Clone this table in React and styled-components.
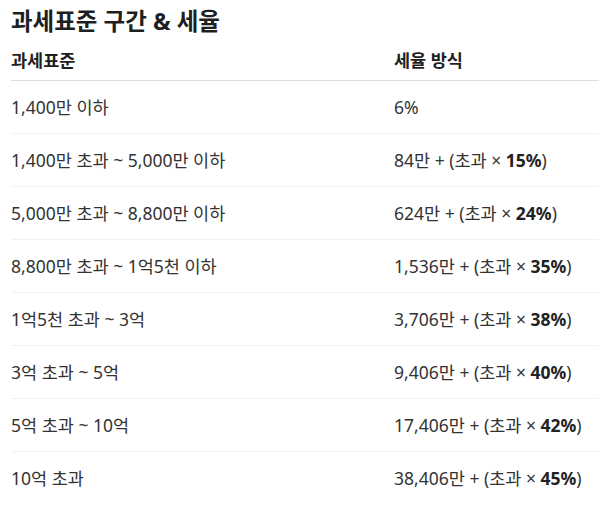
import React from "react";
import styled, { createGlobalStyle } from "styled-components";

const GlobalStyle = createGlobalStyle`
  body {
    margin: 0;
    background: #ffffff;
    font-family: "Noto Sans", "Noto Sans CJK KR", sans-serif;
    color: #2b2b2b;
  }
`;

const Page = styled.div`
  padding: 5px 0 0 11px;
`;

const Title = styled.h2`
  margin: 0;
  font-size: 23.5px;
  font-weight: 700;
  color: #1f1f1f;
  line-height: 32px;
`;

const Table = styled.div`
  display: grid;
  grid-template-columns: 383px 1fr;
`;

const Cell = styled.div`
  font-size: 17.5px;
  line-height: 24px;
  padding: ${(props) => (props.head ? "11px 0 8px" : "14px 0")};
  font-weight: ${(props) => (props.head ? 700 : 400)};
  color: ${(props) => (props.head ? "#1f1f1f" : "#333")};
  border-bottom: 1px solid ${(props) => (props.head ? "#dedede" : "#f1f1f1")};
  border-bottom-width: ${(props) => (props.last ? "0" : "1px")};
  white-space: nowrap;
`;

const Rate = styled.b`
  font-weight: 700;
  color: #222;
`;

const rows = [
  ["1,400만 이하", "6%", null],
  ["1,400만 초과 ~ 5,000만 이하", "84만 + (초과 × ", "15%"],
  ["5,000만 초과 ~ 8,800만 이하", "624만 + (초과 × ", "24%"],
  ["8,800만 초과 ~ 1억5천 이하", "1,536만 + (초과 × ", "35%"],
  ["1억5천 초과 ~ 3억", "3,706만 + (초과 × ", "38%"],
  ["3억 초과 ~ 5억", "9,406만 + (초과 × ", "40%"],
  ["5억 초과 ~ 10억", "17,406만 + (초과 × ", "42%"],
  ["10억 초과", "38,406만 + (초과 × ", "45%"],
];

const App = () => {
  return (
    <>
      <GlobalStyle />
      <Page>
        <Title>과세표준 구간 &amp; 세율</Title>
        <Table>
          <Cell head>과세표준</Cell>
          <Cell head>세율 방식</Cell>
          {rows.map(([range, formula, rate], i) => {
            const last = i === rows.length - 1;
            return (
              <React.Fragment key={range}>
                <Cell last={last}>{range}</Cell>
                <Cell last={last}>
                  {formula}
                  {rate && (
                    <>
                      <Rate>{rate}</Rate>)
                    </>
                  )}
                </Cell>
              </React.Fragment>
            );
          })}
        </Table>
      </Page>
    </>
  );
};

export default App;
